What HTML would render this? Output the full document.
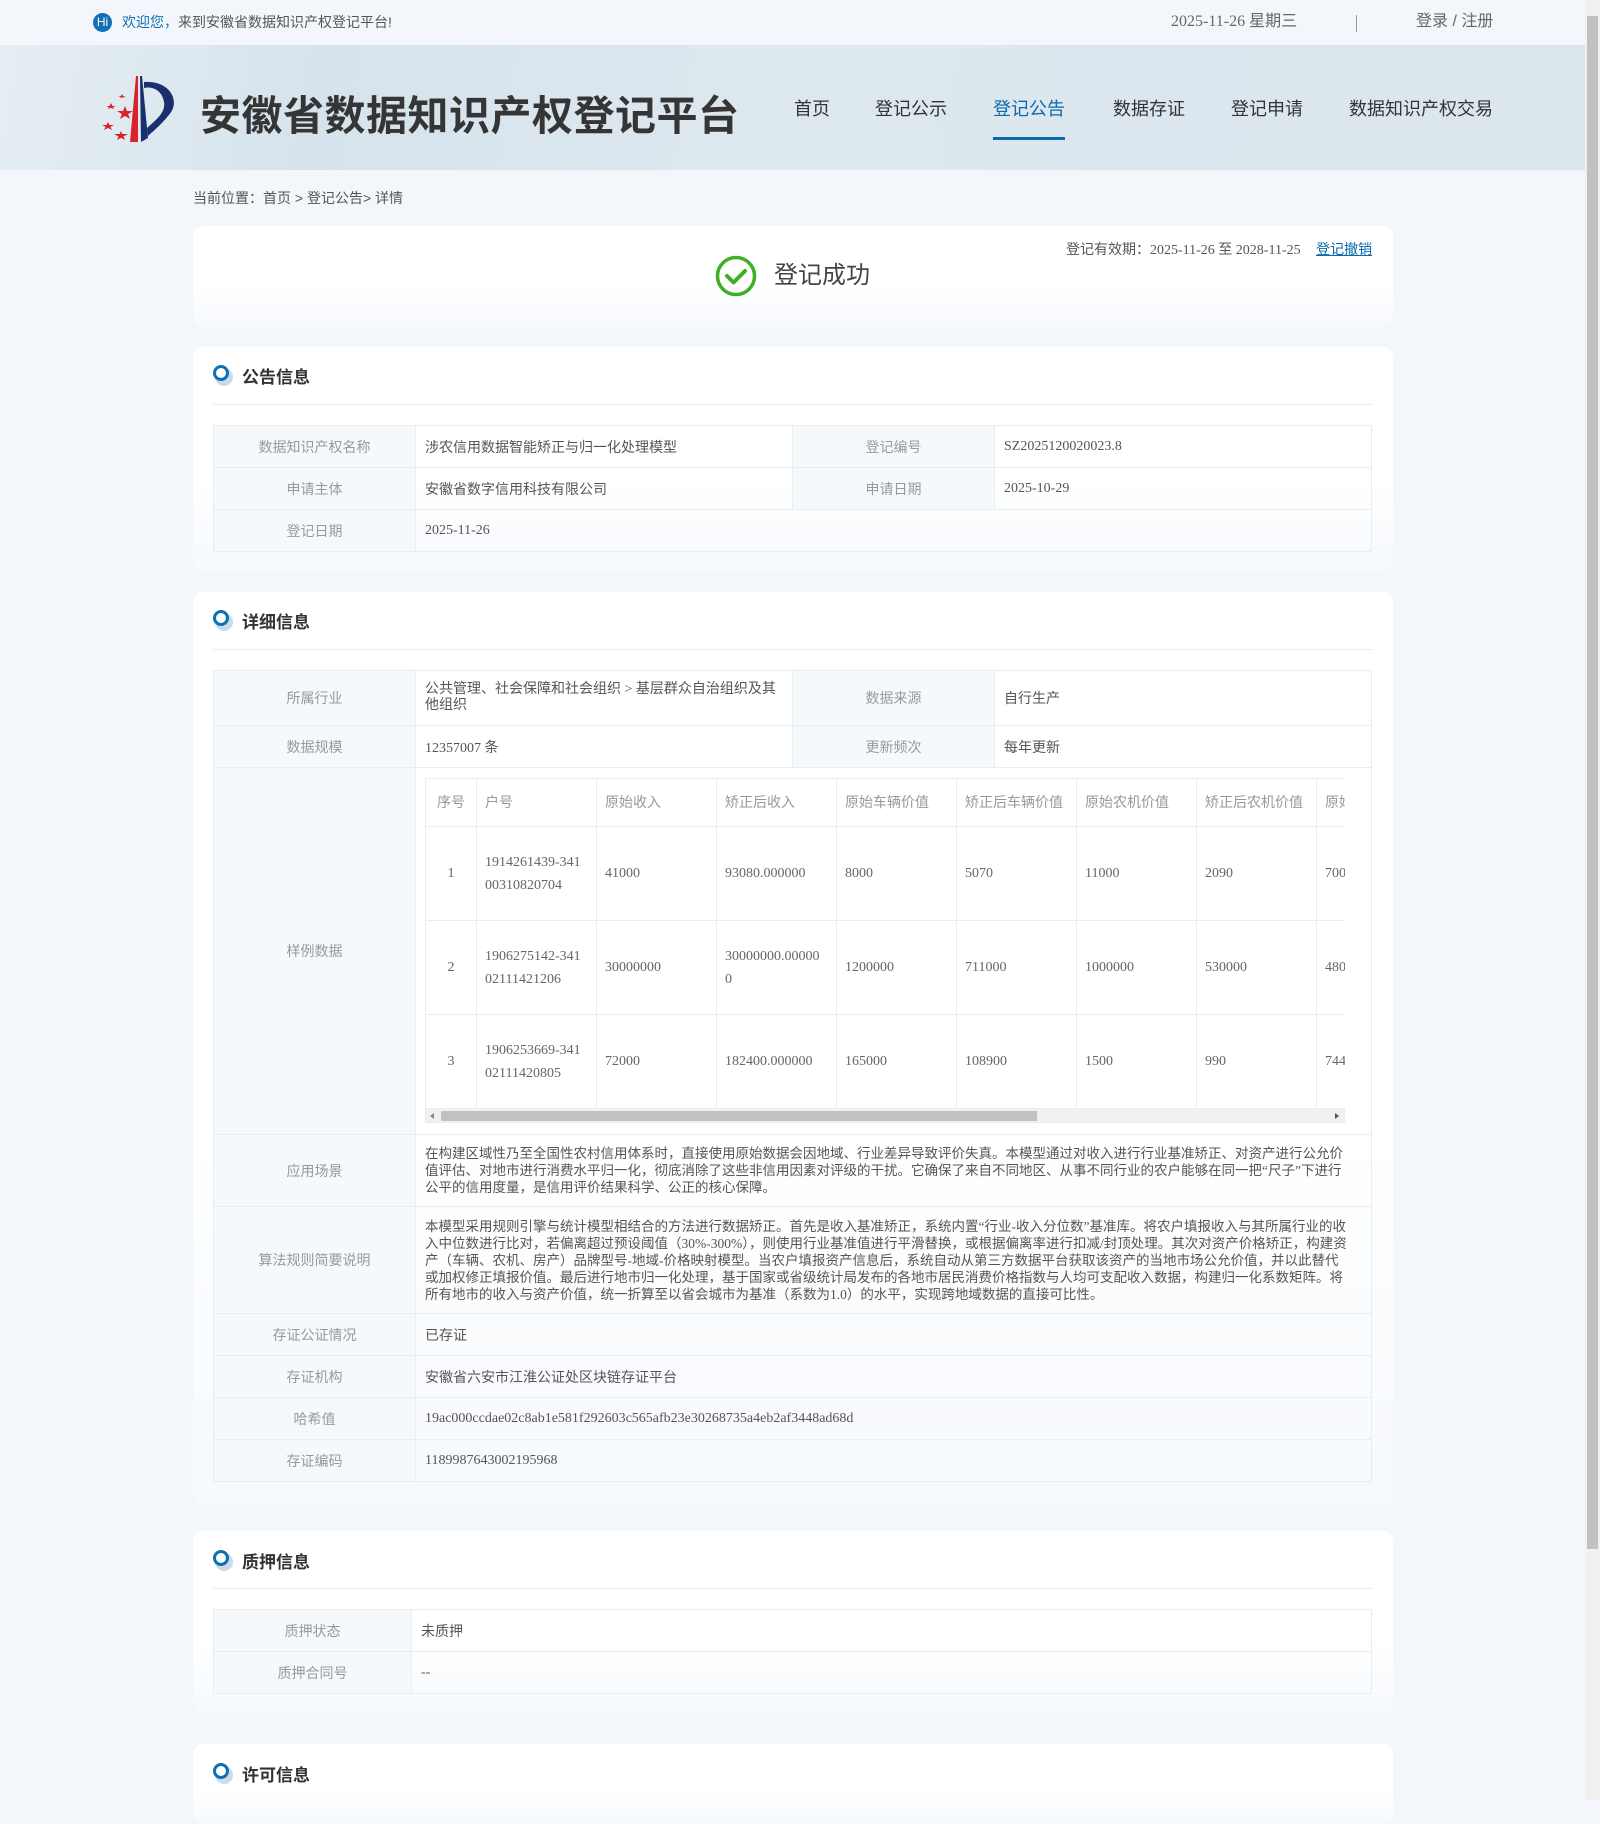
<!DOCTYPE html>
<html><head><meta charset="utf-8">
<style>
*{margin:0;padding:0;box-sizing:border-box}
body{width:1600px;height:1800px;overflow:hidden;background:#f3f6fa;font-family:"Liberation Serif","Noto Sans CJK SC",serif;color:#555;position:relative}
.a{position:absolute}
.sans{font-family:"Liberation Sans","Noto Sans CJK SC",sans-serif}
.top{left:0;top:0;width:1585px;height:45px;background:#f3f7fb}
.banner{left:0;top:45px;width:1585px;height:125px;background:linear-gradient(100deg,#e6eef4 0%,#d6e3ec 20%,#dde7ee 45%,#dce6ed 100%)}
.nav{top:97px;font-size:18px;color:#333;font-family:"Liberation Sans","Noto Sans CJK SC",sans-serif;line-height:24px}
.card{left:193px;width:1200px;border-radius:10px;background:linear-gradient(#fff 0%,#fff 60%,#f6f9fd 100%)}
.ttl{font-size:17px;font-weight:bold;color:#333;font-family:"Liberation Sans","Noto Sans CJK SC",sans-serif}
.ic{width:16px;height:16px;border-radius:50%;border:3px solid #0b6fb3;background:#fff;box-shadow:3px 4px 0 1px #c8dcee}
.dv{left:213px;width:1159px;height:1px;background:#e8edf2}
table{border-collapse:collapse;font-size:14px}
td{border:1px solid #e8edf2;padding:0 9px;vertical-align:middle;color:#555}
td.l{background:#f5f9fc;color:#999;text-align:center;font-family:"Liberation Sans","Noto Sans CJK SC",sans-serif}
td.p{line-height:17px;font-size:13.5px;padding-right:24px}
.inner td{padding:0 8px;color:#666;font-size:14px;line-height:23px}
.inner tr.h td{color:#999;font-family:"Liberation Sans","Noto Sans CJK SC",sans-serif}
</style></head><body>
<div class="a top"></div>
<div class="a" style="left:93px;top:13px;width:19px;height:19px;border-radius:50%;background:#1370b5;color:#fff;font:12px 'Liberation Sans',sans-serif;line-height:19px;text-align:center">Hi</div>
<div class="a sans" style="left:122px;top:13px;font-size:14px;color:#555;line-height:18px"><span style="color:#1370b5">欢迎您，</span>来到安徽省数据知识产权登记平台!</div>
<div class="a" style="left:1171px;top:12px;font-size:16px;color:#666;line-height:20px">2025-11-26 星期三</div>
<div class="a" style="left:1356px;top:15px;width:1px;height:17px;background:#999"></div>
<div class="a sans" style="left:1416px;top:12px;font-size:16px;color:#666;line-height:20px">登录 / 注册</div>

<div class="a banner"></div>
<svg class="a" style="left:90px;top:72px" width="90" height="72" viewBox="0 0 90 72">
<polygon points="30,47 35,34 40,47 27,39 43,39" fill="#d8232a"/>
<polygon points="14,58 18,50 22,58 12,53 24,53" fill="#d8232a"/>
<polygon points="27,68 31,59 35,68 24,62 38,62" fill="#d8232a"/>
<polygon points="18,37 21,31 24,37 16,34 26,34" fill="#d8232a"/>
<polygon points="30,26 32,22 34,26 28,24 36,24" fill="#d8232a"/>
<polygon points="40,70 46,4 48,4 48,70" fill="#d8232a"/>
<polygon points="50,4 52,4 58,66 51,70" fill="#1a2f6e"/>
<path d="M54,10 C80,8 92,30 78,44 C70,54 62,60 58,64 L57,56 C66,48 76,40 74,30 C72,18 62,14 54,16Z" fill="#1a2f6e"/>
</svg>
<div class="a" style="left:200px;top:88px;font-size:41px;font-weight:bold;color:#353535;font-family:'Noto Sans CJK SC',sans-serif;line-height:48px;letter-spacing:0.5px">安徽省数据知识产权登记平台</div>
<div class="a nav" style="left:794px">首页</div>
<div class="a nav" style="left:875px">登记公示</div>
<div class="a nav" style="left:993px;color:#0a6aad">登记公告</div>
<div class="a" style="left:993px;top:137px;width:72px;height:3px;background:#0a6aad"></div>
<div class="a nav" style="left:1113px">数据存证</div>
<div class="a nav" style="left:1231px">登记申请</div>
<div class="a nav" style="left:1349px">数据知识产权交易</div>

<div class="a" style="left:1585px;top:0;width:15px;height:1800px;background:#f1f1f1"></div>
<div class="a" style="left:1587px;top:16px;width:11px;height:1533px;background:#c1c1c1"></div>

<div class="a sans" style="left:193px;top:188px;font-size:14px;color:#555">当前位置：首页 &gt; 登记公告&gt; 详情</div>

<div class="a card" style="top:226px;height:101px"></div>
<svg class="a" style="left:715px;top:255px" width="42" height="42" viewBox="0 0 42 42"><circle cx="21" cy="21" r="18.5" fill="none" stroke="#3fae29" stroke-width="3.5"/><path d="M12,21 L18.5,27.5 L30,16" fill="none" stroke="#3fae29" stroke-width="4" stroke-linecap="round" stroke-linejoin="round"/></svg>
<div class="a sans" style="left:774px;top:261px;font-size:24px;color:#444;line-height:30px">登记成功</div>
<div class="a" style="left:1066px;top:242px;font-size:14px;color:#555;line-height:18px">登记有效期：2025-11-26 至 2028-11-25 <span style="margin-left:12px;color:#0a6aad;text-decoration:underline">登记撤销</span></div>

<div class="a card" style="top:347px;height:224px"></div>
<div class="a ic" style="left:213px;top:365px"></div>
<div class="a ttl" style="left:242px;top:363px">公告信息</div>
<div class="a dv" style="top:404px"></div>
<table class="a" style="left:213px;top:425px;width:1159px">
<tr style="height:42px"><td class="l" style="width:202px">数据知识产权名称</td><td style="width:377px">涉农信用数据智能矫正与归一化处理模型</td><td class="l" style="width:202px">登记编号</td><td>SZ2025120020023.8</td></tr>
<tr style="height:42px"><td class="l">申请主体</td><td>安徽省数字信用科技有限公司</td><td class="l">申请日期</td><td>2025-10-29</td></tr>
<tr style="height:42px"><td class="l">登记日期</td><td colspan="3">2025-11-26</td></tr>
</table>

<div class="a card" style="top:592px;height:912px"></div>
<div class="a ic" style="left:213px;top:610px"></div>
<div class="a ttl" style="left:242px;top:608px">详细信息</div>
<div class="a dv" style="top:649px"></div>
<table class="a" style="left:213px;top:670px;width:1159px;table-layout:fixed">
<col style="width:202px"><col style="width:377px"><col style="width:202px"><col>
<tr style="height:55px"><td class="l">所属行业</td><td style="line-height:16px">公共管理、社会保障和社会组织 &gt; 基层群众自治组织及其他组织</td><td class="l">数据来源</td><td>自行生产</td></tr>
<tr style="height:42px"><td class="l">数据规模</td><td>12357007 条</td><td class="l">更新频次</td><td>每年更新</td></tr>
<tr style="height:367px"><td class="l">样例数据</td><td colspan="3"></td></tr>
<tr style="height:72px"><td class="l">应用场景</td><td colspan="3" class="p">在构建区域性乃至全国性农村信用体系时，直接使用原始数据会因地域、行业差异导致评价失真。本模型通过对收入进行行业基准矫正、对资产进行公允价值评估、对地市进行消费水平归一化，彻底消除了这些非信用因素对评级的干扰。它确保了来自不同地区、从事不同行业的农户能够在同一把“尺子”下进行公平的信用度量，是信用评价结果科学、公正的核心保障。</td></tr>
<tr style="height:107px"><td class="l">算法规则简要说明</td><td colspan="3" class="p">本模型采用规则引擎与统计模型相结合的方法进行数据矫正。首先是收入基准矫正，系统内置“行业-收入分位数”基准库。将农户填报收入与其所属行业的收入中位数进行比对，若偏离超过预设阈值（30%-300%），则使用行业基准值进行平滑替换，或根据偏离率进行扣减/封顶处理。其次对资产价格矫正，构建资产（车辆、农机、房产）品牌型号-地域-价格映射模型。当农户填报资产信息后，系统自动从第三方数据平台获取该资产的当地市场公允价值，并以此替代或加权修正填报价值。最后进行地市归一化处理，基于国家或省级统计局发布的各地市居民消费价格指数与人均可支配收入数据，构建归一化系数矩阵。将所有地市的收入与资产价值，统一折算至以省会城市为基准（系数为1.0）的水平，实现跨地域数据的直接可比性。</td></tr>
<tr style="height:42px"><td class="l">存证公证情况</td><td colspan="3">已存证</td></tr>
<tr style="height:42px"><td class="l">存证机构</td><td colspan="3">安徽省六安市江淮公证处区块链存证平台</td></tr>
<tr style="height:42px"><td class="l">哈希值</td><td colspan="3">19ac000ccdae02c8ab1e581f292603c565afb23e30268735a4eb2af3448ad68d</td></tr>
<tr style="height:42px"><td class="l">存证编码</td><td colspan="3">1189987643002195968</td></tr>
</table>
<div class="a" style="left:425px;top:778px;width:920px;height:345px;overflow:hidden">
<table class="inner" style="table-layout:fixed;width:1011px">
<col style="width:51px"><col style="width:120px"><col style="width:120px"><col style="width:120px"><col style="width:120px"><col style="width:120px"><col style="width:120px"><col style="width:120px"><col style="width:120px">
<tr class="h" style="height:48px"><td style="text-align:center">序号</td><td>户号</td><td>原始收入</td><td>矫正后收入</td><td>原始车辆价值</td><td>矫正后车辆价值</td><td>原始农机价值</td><td>矫正后农机价值</td><td>原始房产价值</td></tr>
<tr style="height:94px"><td style="text-align:center">1</td><td>1914261439-341<br>00310820704</td><td>41000</td><td>93080.000000</td><td>8000</td><td>5070</td><td>11000</td><td>2090</td><td>70000</td></tr>
<tr style="height:94px"><td style="text-align:center">2</td><td>1906275142-341<br>02111421206</td><td>30000000</td><td>30000000.00000<br>0</td><td>1200000</td><td>711000</td><td>1000000</td><td>530000</td><td>480000</td></tr>
<tr style="height:94px"><td style="text-align:center">3</td><td>1906253669-341<br>02111420805</td><td>72000</td><td>182400.000000</td><td>165000</td><td>108900</td><td>1500</td><td>990</td><td>744000</td></tr>
</table>
<div class="a" style="left:0;top:330px;width:920px;height:15px;background:#f1f1f1;border:1px solid #e8edf2"></div>
<div class="a" style="left:16px;top:333px;width:596px;height:10px;background:#c1c1c1"></div>
<div class="a" style="left:5px;top:335px;width:0;height:0;border:3px solid transparent;border-right:4px solid #888;border-left:0"></div>
<div class="a" style="left:910px;top:335px;width:0;height:0;border:3px solid transparent;border-left:4px solid #555;border-right:0"></div>
</div>

<div class="a card" style="top:1531px;height:182px"></div>
<div class="a ic" style="left:213px;top:1550px"></div>
<div class="a ttl" style="left:242px;top:1548px">质押信息</div>
<div class="a dv" style="top:1588px"></div>
<table class="a" style="left:213px;top:1609px;width:1159px">
<tr style="height:42px"><td class="l" style="width:198px">质押状态</td><td>未质押</td></tr>
<tr style="height:42px"><td class="l">质押合同号</td><td>--</td></tr>
</table>

<div class="a card" style="top:1744px;height:80px"></div>
<div class="a ic" style="left:213px;top:1763px"></div>
<div class="a ttl" style="left:242px;top:1761px">许可信息</div>
</body></html>
